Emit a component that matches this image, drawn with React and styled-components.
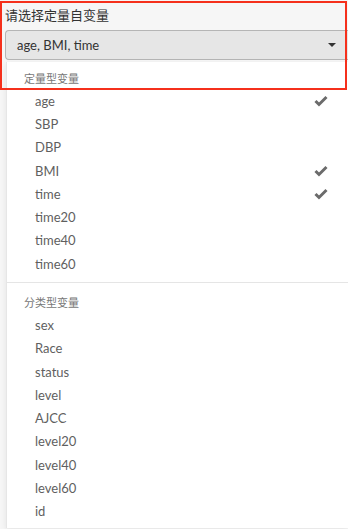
import React from 'react'
import styled, { createGlobalStyle } from 'styled-components'

const GlobalStyle = createGlobalStyle`
  body {
    margin: 0;
    background: #f6f6f6;
    font-family: Lato, "Noto Sans CJK SC", sans-serif;
  }
`

const Page = styled.div`
  position: relative;
  width: 348px;
  height: 529px;
  overflow: hidden;
  padding-top: 6px;
  box-sizing: border-box;
`

const Label = styled.div`
  margin-left: 5px;
  font-size: 13px;
  line-height: 19px;
  color: #333;
`

const SelectButton = styled.div`
  margin: 5px 0 0 5px;
  height: 30px;
  box-sizing: border-box;
  display: flex;
  align-items: center;
  justify-content: space-between;
  padding: 0 12px 0 11px;
  background: #e6e6e6;
  border: 1px solid #b5b5b5;
  border-right: none;
  border-radius: 4px 0 0 4px;
  font-size: 13px;
  color: #333;
`

const Caret = styled.span`
  width: 0;
  height: 0;
  border-left: 4px solid transparent;
  border-right: 4px solid transparent;
  border-top: 4px solid #333;
`

const Menu = styled.ul`
  list-style: none;
  margin: 2px 0 0 6px;
  padding: 4px 0 5px;
  background: #fff;
  border-left: 1px solid #e6e6e6;
  box-shadow: 0 2px 6px rgba(0, 0, 0, 0.08);
`

const Header = styled.li`
  height: 23.3px;
  display: flex;
  align-items: center;
  padding-left: 17px;
  font-size: 11px;
  color: #777;
`

const Item = styled.li`
  height: 23.25px;
  display: flex;
  align-items: center;
  justify-content: space-between;
  padding: 0 20px 0 28px;
  font-size: 13px;
  color: #5f5f5f;
`

const Divider = styled.li`
  height: 1px;
  margin: 7px 0 7px;
  background: #e5e5e5;
`

const Highlight = styled.div`
  position: absolute;
  left: 0;
  top: 1px;
  width: 347px;
  height: 89px;
  box-sizing: border-box;
  border: 2px solid #f5301c;
  pointer-events: none;
`

const Check = () => (
  <svg width="14" height="12" viewBox="0 0 14 12">
    <path d="M1.5 6 L5 9.5 L12.5 2" fill="none" stroke="#6b6b6b" strokeWidth="3" strokeLinecap="butt" strokeLinejoin="miter" />
  </svg>
)

const numeric = ['age', 'SBP', 'DBP', 'BMI', 'time', 'time20', 'time40', 'time60']
const categorical = ['sex', 'Race', 'status', 'level', 'AJCC', 'level20', 'level40', 'level60', 'id']
const selected = ['age', 'BMI', 'time']

export default function App() {
  return (
    <Page>
      <GlobalStyle />
      <Label>请选择定量自变量</Label>
      <SelectButton>
        <span>{selected.join(', ')}</span>
        <Caret />
      </SelectButton>
      <Menu>
        <Header>定量型变量</Header>
        {numeric.map(v => (
          <Item key={v}>
            <span>{v}</span>
            {selected.includes(v) && <Check />}
          </Item>
        ))}
        <Divider />
        <Header>分类型变量</Header>
        {categorical.map(v => (
          <Item key={v}>
            <span>{v}</span>
          </Item>
        ))}
      </Menu>
      <Highlight />
    </Page>
  )
}
